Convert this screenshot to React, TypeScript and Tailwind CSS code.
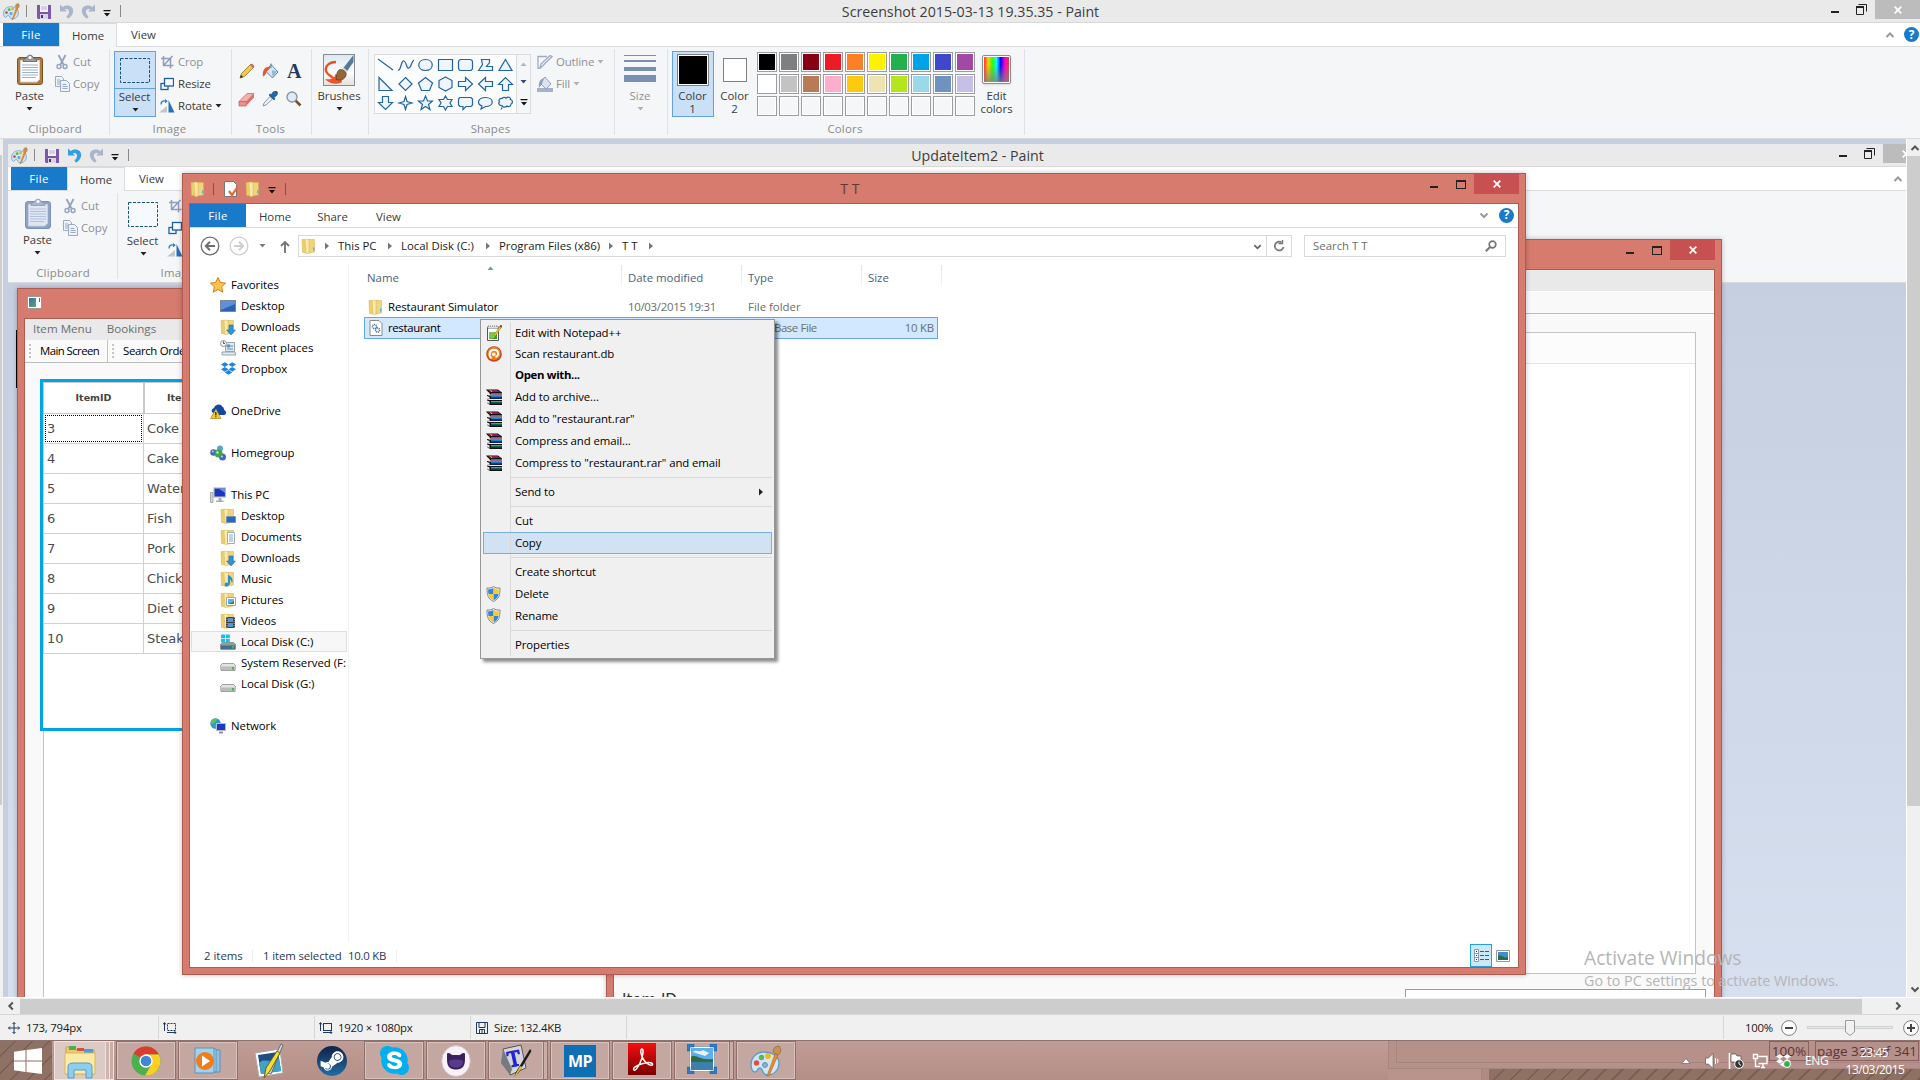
import React from "react";
import { FaSkype, FaSteamSymbol, FaDropbox } from "react-icons/fa";

type Kids = { children?: React.ReactNode };

/* ---------- small glyphs ---------- */

const Caret = ({ c = "#222", className = "" }: { c?: string; className?: string }) => (
  <svg width="7" height="4" viewBox="0 0 7 4" className={className}>
    <path d="M0.5 0h6l-3 3.4z" fill={c} />
  </svg>
);

const Chevron = ({ dir, c = "#9a9a9a", s = 10 }: { dir: "up" | "down" | "left" | "right"; c?: string; s?: number }) => {
  const d = { up: "M1.5 7L5 3.5L8.5 7", down: "M1.5 3.5L5 7L8.5 3.5", left: "M6.8 1.5L3.3 5L6.8 8.5", right: "M3.3 1.5L6.8 5L3.3 8.5" }[dir];
  return (
    <svg width={s} height={s} viewBox="0 0 10 10" fill="none" stroke={c} strokeWidth="2">
      <path d={d} />
    </svg>
  );
};

const Help = () => (
  <span className="flex h-[15px] w-[15px] shrink-0 items-center justify-center rounded-full bg-[#1979ca] text-[12px] font-bold leading-none text-white">?</span>
);

const QatCaret = () => (
  <svg width="8" height="7" viewBox="0 0 8 7">
    <path d="M0.5 0h7v1.2h-7zM1 3h6l-3 3.5z" fill="#111" />
  </svg>
);

const PaletteIcon = ({ s = 17 }: { s?: number }) => (
  <svg width={s} height={s} viewBox="0 0 32 32">
    <path d="M14 7C6 7 1 13 1 20c0 4 2 7 4 7 3 0 2-4 5-4s2 7 7 7c7 0 12-5 12-12C29 11 22 7 14 7z" fill="#cfe6f5" stroke="#5c9cc8" strokeWidth="1.4" />
    <circle cx="6.500" cy="18" r="2.700" fill="#e04a3f" />
    <circle cx="11.500" cy="12.500" r="2.700" fill="#58b947" />
    <circle cx="18" cy="11" r="2.900" fill="#f4b61e" />
    <circle cx="15" cy="20" r="2.400" fill="#8cb4d4" stroke="#5c87ad" />
    <path d="M25 9l3 1L19 31l-2 0z" fill="#f08a2b" stroke="#b9611a" strokeWidth="0.6" />
    <path d="M23 7c0-4 3-6 6-6 3 3 2 7-1 9z" fill="#c79156" stroke="#8a5c2e" strokeWidth="0.6" />
  </svg>
);

const SaveIcon = () => (
  <svg width="14" height="14" viewBox="0 0 14 14">
    <path d="M0 0h14v14H1l-1-1z" fill="#7d57a8" />
    <rect x="3" y="0" width="8" height="7" fill="#f3f1f8" />
    <path d="M4 2h6M4 4h6" stroke="#b9aed0" />
    <rect x="3" y="9" width="8" height="5" fill="#d9d3e6" />
    <rect x="4" y="10" width="2" height="3" fill="#4b3570" />
  </svg>
);

const UndoIcon = ({ c, flip = false }: { c: string; flip?: boolean }) => (
  <svg width="14" height="15" viewBox="0 0 14 15" className={flip ? "-ml-[2px] -scale-x-100" : ""}>
    <path d="M0 0.500v7h7L4.800 5.300C9 3.600 11 8.500 6.500 12.500L8 14.800C16 10 14.500 0 5 1.800L2.600 3z" fill={c} />
  </svg>
);

const FolderIcon = ({ extra, s = 16 }: { extra?: React.ReactNode; s?: number }) => (
  <svg width={s} height={s} viewBox="0 0 16 16" className="shrink-0">
    <path d="M1 1.500h6l1 1v12.500L1.500 14.500z" fill="#eccf6c" stroke="#cfae4b" strokeWidth="0.5" />
    <path d="M4 1l5 0.500v13L5 16z" fill="#fbeaa9" stroke="#d9bb5e" strokeWidth="0.5" />
    <path d="M8 1.500h5.500v12.500L8 15z" fill="#efd57c" stroke="#d0ae4e" strokeWidth="0.5" />
    {extra ?? <path d="M12 9.500h1.500v3H12z" fill="#4fb4e6" />}
  </svg>
);

/* ---------- Paint ribbon icons ---------- */

const PasteIcon = ({ off }: { off: boolean }) => (
  <svg width="26" height="31" viewBox="0 0 26 31">
    <rect x="0.500" y="3.500" width="25" height="27" rx="2.500" fill={off ? "#8fa1c4" : "#b17c3b"} stroke={off ? "#7d90b6" : "#7d5422"} />
    <path d="M3.500 6.500h19v19l-3 2.500h-16z" fill={off ? "#dfe6f3" : "#fff"} stroke={off ? "#c6d0e4" : "#cfd4da"} />
    <path d="M5 11h16M5 13.500h16M5 16h16M5 18.500h16M5 21h16M5 23.500h14" stroke={off ? "#b4c1dc" : "#9db0c8"} />
    <path d="M6 7.500c0-3 3-2 4-4.500 1-2.500 5-2.500 6 0 1 2.500 4 1.500 4 4.500z" fill={off ? "#a8b5d0" : "#989ca1"} stroke={off ? "#8b9bbd" : "#5f6368"} strokeWidth="0.8" />
    <circle cx="13" cy="3.500" r="1.500" fill="#fff" />
  </svg>
);

const CutIcon = () => (
  <svg width="16" height="16" viewBox="0 0 16 16" fill="none" stroke="#93a2bd">
    <path d="M4.500 1l5 9.500M11.500 1l-5 9.500" strokeWidth="1.8" />
    <circle cx="5" cy="12.500" r="2" strokeWidth="1.4" />
    <circle cx="11" cy="12.500" r="2" strokeWidth="1.4" />
  </svg>
);

const CopyIcon = () => (
  <svg width="16" height="16" viewBox="0 0 16 16" fill="#eef2f9" stroke="#9aa9c6">
    <path d="M1.500 0.500h6l2 2v8h-8z" />
    <path d="M3 4h3M3 6h3M3 8h3" />
    <path d="M6.500 4.500h6l3 3v8h-9z" />
    <path d="M8.500 8.500h4M8.500 10.500h5M8.500 12.500h5" />
  </svg>
);

const CropIcon = () => (
  <svg width="14" height="14" viewBox="0 0 14 14" fill="none" stroke="#8d9dbb" strokeWidth="1.500">
    <path d="M3.500 1v9.500h10M1 3.500h9.500v10M4 10l8.500-9" />
  </svg>
);

const ResizeIcon = () => (
  <svg width="14" height="14" viewBox="0 0 14 14" fill="#f7fafe" stroke="#1a5ea5" strokeWidth="1.300">
    <rect x="1" y="6.500" width="7" height="6" />
    <rect x="4.500" y="1.500" width="9" height="7.500" />
  </svg>
);

const RotateIcon = () => (
  <svg width="16" height="14" viewBox="0 0 16 14">
    <path d="M0 13.500h8V7z" fill="#c3c7cc" />
    <path d="M9.500 1v12.500h6z" fill="#2372b9" />
    <path d="M2 5.500C2 2.500 4 1.500 6.500 2" fill="none" stroke="#2e80c8" strokeWidth="1.400" />
    <path d="M6 0l2.800 2.200L6 4.200z" fill="#2e80c8" />
  </svg>
);

const PencilIcon = () => (
  <svg width="16" height="16" viewBox="0 0 16 16">
    <path d="M1 15l1.500-4.500L12 1l3 3-9.500 9.500z" fill="#f3c84d" stroke="#7c6320" strokeWidth="0.700" />
    <path d="M1 15l1-3 2 2z" fill="#222" />
    <path d="M11 2l1-1c1-1 4 2 3 3l-1 1z" fill="#d0665d" />
  </svg>
);

const BucketIcon = () => (
  <svg width="17" height="17" viewBox="0 0 17 17">
    <path d="M9 1.500l7 7.500-5.500 6L4 8.500z" fill="#d9e7f3" stroke="#5d83a8" />
    <path d="M9 5V0.500" stroke="#5d83a8" />
    <path d="M10 7l5 1.500-4.500 5.500z" fill="#8fb4d4" />
    <path d="M9 4C4 3 0 6 1 13.500 3.500 13 4 9 5.500 8z" fill="#e7592b" />
  </svg>
);

const EraserIcon = () => (
  <svg width="17" height="15" viewBox="0 0 17 15">
    <path d="M1 9.500L9 1.500h7L8.500 9.500z" fill="#f6b0ac" stroke="#b9615d" strokeWidth="0.700" />
    <path d="M1 9.500h7.500L8 14H1z" fill="#ee918c" stroke="#b9615d" strokeWidth="0.700" />
    <path d="M8.500 9.500L16 1.500v4L8 14z" fill="#d9716c" />
  </svg>
);

const DropperIcon = () => (
  <svg width="16" height="16" viewBox="0 0 16 16">
    <path d="M1 15l1-3 6-6.500 2.500 2.500L4 14z" fill="#e9eff5" stroke="#76879a" strokeWidth="0.800" />
    <path d="M7 4l5 5 1-1-1-1.500c4-2 4-5 3-6s-4-0.500-5.500 3L8 3z" fill="#2067a8" stroke="#16487a" strokeWidth="0.600" />
  </svg>
);

const MagnifierIcon = () => (
  <svg width="16" height="16" viewBox="0 0 16 16">
    <path d="M9.500 9.500l5 5" stroke="#7b5127" strokeWidth="2.600" />
    <circle cx="6" cy="6" r="5" fill="#dcebf7" stroke="#8d979f" strokeWidth="1.400" />
  </svg>
);

const BrushesIcon = () => (
  <svg width="32" height="32" viewBox="0 0 32 32">
    <defs>
      <linearGradient id="brushBg" x1="0" y1="0" x2="0" y2="1">
        <stop offset="0" stopColor="#dbe8f3" />
        <stop offset="0.600" stopColor="#fdfdfc" />
        <stop offset="1" stopColor="#e3e0dc" />
      </linearGradient>
    </defs>
    <rect x="0.500" y="0.500" width="31" height="31" fill="url(#brushBg)" stroke="#888d93" />
    <path d="M13 8C5 8 2 13 3 17c1 4 6 5 9 9" fill="none" stroke="#ea5324" strokeWidth="2.400" />
    <path d="M2 25c4 5 13 6 17 3l-1-5-6-3c1 4-4 6-10 5z" fill="#e8562a" />
    <path d="M30.500 1v7l-7 10-4-3z" fill="#56799e" />
    <path d="M20.500 13.500l4 3.500-2 3.500-5-4z" fill="#d5d7d8" />
    <path d="M17 15.500c4 0 7 3 6 6-2 5-6 5-10 4 1-4 0-8 4-10z" fill="#94673a" stroke="#5c3c1c" strokeWidth="0.700" />
  </svg>
);

const shapePaths = [
  "M1 2l15 11",
  "M1 13C4 14 4 3 7 4s2 8 5 7 2-7 5-8",
  "M8.500 2.500c9 0 9 11 0 11s-9-11 0-11z",
  "M1.500 2.500h14v11h-14z",
  "M4 2.500h9a2.500 2.500 0 012.500 2.500v6a2.500 2.500 0 01-2.500 2.500H4A2.500 2.500 0 011.500 11V5A2.500 2.500 0 014 2.500z",
  "M1.500 13.500l4-6-1-5h8v3l-3 4h6v4z",
  "M8.500 2.500l6.500 11H2z",
  "M2 1.500v13h13z",
  "M8.500 1.500l6.500 6.500-6.500 6.500L2 8z",
  "M8.500 1.500l7 5.500-3 7.500h-8L1.500 7z",
  "M8.500 1l6.500 3.500v7L8.500 15 2 11.500v-7z",
  "M1.500 5.500h7v-4L15.500 8l-7 6.500v-4h-7z",
  "M15.500 5.500h-7v-4L1.500 8l7 6.500v-4h7z",
  "M5.500 14.500v-6h-4L8.500 1.500l7 7h-4v6z",
  "M5.500 1.500v6h-4l7 7 7-7h-4v-6z",
  "M8.500 1.500L10 6.500 15 8l-5 1.500-1.500 5L7 9.500 2 8l5-1.500z",
  "M8.500 1l2 5h5l-4 3.500 1.500 5-4.500-3-4.500 3L5.500 9.500 1.500 6h5z",
  "M8.500 1l2 3.500h4.500L13 8l2 3.500h-4.500L8.500 15l-2-3.500H2L4 8 2 4.500h4.500z",
  "M3 2.500h11l1.500 1.500v6L14 11.500H9L6 14.500v-3H3L1.500 10V4z",
  "M8.500 2.500c9 0 9 9 0 9L4 14l1-3C-1 9 1 2.500 8.500 2.500z",
  "M5 3.500c1-2 4-1 4-0.500 2-2 5-0.500 4.500 1.500 3 1 2 4 0.500 4.500 0 3-3 3-4 2-2 2-5 1-5-0.500C2 11 1 8 2.500 7 1 5 3 3 5 3.500zM5 12.500l-1 2",
];

const ShapeIcon = ({ d }: { d: string }) => (
  <svg width="17" height="16" viewBox="0 0 17 16" fill="#eef5fc" stroke="#24649f" strokeWidth="1.200">
    <path d={d} />
  </svg>
);

/* ---------- Paint window header ---------- */

const Group = ({ w, label, children }: Kids & { w: string; label?: string }) => (
  <div className={`flex h-[91px] shrink-0 flex-col ${w}`}>
    <div className="flex h-[73px] pt-[4px]">{children}</div>
    <div className="flex h-[18px] items-center justify-center pr-[2px] tracking-[0.02em] text-[#8a8a8a]">{label}</div>
  </div>
);

const Sep = () => <div className="mt-[2px] h-[86px] w-px shrink-0 bg-[#e1e2e3]" />;

const SmallItem = ({ icon, label, off, caret }: { icon: React.ReactNode; label: string; off?: boolean; caret?: boolean }) => (
  <div className={`flex h-[22px] items-center gap-[3px] ${off ? "text-[#8f9093]" : "text-[#3b3b3b]"}`}>
    <span className="flex w-4 justify-center">{icon}</span>
    <span className="whitespace-nowrap tracking-[-0.01em]">{label}</span>
    {caret && <Caret c={off ? "#b0b0b0" : "#222"} />}
  </div>
);

const palette = [
  ["bg-black", "bg-[#7f7f7f]", "bg-[#880015]", "bg-[#ed1c24]", "bg-[#ff7f27]", "bg-[#fff200]", "bg-[#22b14c]", "bg-[#00a2e8]", "bg-[#3f48cc]", "bg-[#a349a4]"],
  ["bg-white", "bg-[#c3c3c3]", "bg-[#b97a57]", "bg-[#ffaec9]", "bg-[#ffc90e]", "bg-[#efe4b0]", "bg-[#b5e61d]", "bg-[#99d9ea]", "bg-[#7092be]", "bg-[#c8bfe7]"],
  Array(10).fill("bg-[#f5f6f7]"),
];

const CloseGlyph = () => (
  <svg width="8" height="8" viewBox="0 0 8 8">
    <path d="M0.700 0.700l6.600 6.600M7.300 0.700L0.700 7.300" stroke="#fff" strokeWidth="1.700" />
  </svg>
);

const CaptionButtons = () => (
  <div className="flex items-start">
    <div className="mt-[11px] mr-[17px] h-[2px] w-[8px] bg-[#222]" />
    <svg width="11" height="11" viewBox="0 0 11 11" className="mt-[4px] mr-[8px]">
      <path d="M2.500 0.500h8v7" fill="none" stroke="#222" />
      <path d="M0.500 3v7.500h7V3z" fill="none" stroke="#222" />
      <path d="M0 2h8v2H0z" fill="#222" />
    </svg>
    <div className="flex h-[19px] w-[45px] items-center justify-center bg-[#bcbcbc]">
      <CloseGlyph />
    </div>
  </div>
);

const PaintHeader = ({ title, inner }: { title: string; inner: boolean }) => (
  <div className="flex w-[1920px] flex-col">
    <div className="grid h-[23px] grid-cols-[808px_325px_1fr] border-b border-[#d9d9d9] bg-[#eaeaea]">
      <div className="flex items-center pl-[3px]">
        <PaletteIcon />
        <div className="ml-[6px] h-3 w-px bg-[#8a8a8a]" />
        <div className="ml-[10px] flex items-center gap-[9px] pt-[1px]">
          <SaveIcon />
          <UndoIcon c={inner ? "#2f9fe6" : "#a9b5cb"} />
          <UndoIcon c="#a9b5cb" flip />
          <span className="-ml-px flex pt-[3px]">
            <QatCaret />
          </span>
        </div>
        <div className="ml-[9px] h-3 w-px bg-[#8a8a8a]" />
      </div>
      <div className={`flex items-center justify-center whitespace-nowrap text-[14.2px] text-[#3d3d3d] ${inner ? "pt-px pr-[2px]" : "pt-px"}`}>{title}</div>
      <div className="flex justify-end">
        <CaptionButtons />
      </div>
    </div>
    <div className="flex h-6 border-b border-[#dadbdc] bg-white pl-[3px] text-[#3b3b3b]">
      <div className="flex w-14 items-center justify-center bg-[#1979ca] tracking-[0.03em] text-white">File</div>
      <div className="z-10 -mb-px flex w-[58px] items-center justify-center border-x border-t border-[#dadbdc] bg-[#f5f6f7]">Home</div>
      <div className="flex w-[53px] items-center justify-center">View</div>
      <div className="ml-auto flex items-center gap-[9px] pr-[1px]">
        <Chevron dir="up" />
        {!inner && <Help />}
        {inner && <div className="w-[15px]" />}
      </div>
    </div>
    <div className="flex h-[92px] border-b border-[#d9dadb] bg-[#f5f6f7] pl-[3px] text-[#3b3b3b]">
      <Group w="w-[106px]" label="Clipboard">
        <div className="flex w-[53px] flex-col items-center pt-[3px]">
          <PasteIcon off={inner} />
          <span className="mt-[3px] leading-4">Paste</span>
          <Caret className="mt-[3px]" />
        </div>
        <div className="-ml-[2px] flex flex-col">
          <SmallItem icon={<CutIcon />} label="Cut" off />
          <SmallItem icon={<CopyIcon />} label="Copy" off />
        </div>
      </Group>
      <Sep />
      <Group w="w-[121px]" label="Image">
        <div className={`ml-[4px] flex h-[66px] w-[42px] flex-col items-center border ${inner ? "border-transparent" : "border-[#62a2e4] bg-[#c9e0f7]"}`}>
          <div className={`flex h-[37px] w-full items-center justify-center border-b ${inner ? "border-transparent" : "border-[#62a2e4]"}`}>
            <svg width="30" height="25" viewBox="0 0 30 25">
              <rect x="0.500" y="0.500" width="29" height="24" fill={inner ? "#f6fafe" : "none"} stroke="#14508c" strokeDasharray="3 1.500" />
            </svg>
          </div>
          <span className="-ml-px leading-4">Select</span>
          <Caret className="mt-[3px]" />
        </div>
        <div className="ml-[3px] flex flex-col">
          <SmallItem icon={<CropIcon />} label="Crop" off />
          <SmallItem icon={<ResizeIcon />} label="Resize" />
          <SmallItem icon={<RotateIcon />} label="Rotate" caret />
        </div>
      </Group>
      <Sep />
      <Group w="w-[79px]" label="Tools">
        <div className="mt-[6px] ml-[3px] grid h-[56px] w-[71px] grid-cols-3 grid-rows-2 place-items-center">
          <PencilIcon />
          <BucketIcon />
          <span className="font-['Liberation_Serif'] text-[20px] font-bold leading-none text-[#1f3a63]">A</span>
          <EraserIcon />
          <DropperIcon />
          <MagnifierIcon />
        </div>
      </Group>
      <Sep />
      <Group w="w-[56px]">
        <div className="flex w-full flex-col items-center pt-[3px] pr-[2px]">
          <BrushesIcon />
          <span className="mt-[2px] leading-4">Brushes</span>
          <Caret className="mt-[3px]" />
        </div>
      </Group>
      <Sep />
      <Group w="w-[245px]" label="Shapes">
        <div className="mt-[3px] ml-[5px] flex h-[60px] border border-[#dadbdc] bg-[#fbfcfd]">
          <div className="grid w-[141px] grid-cols-7 grid-rows-3 place-items-center pr-px">
            {shapePaths.map((d) => (
              <ShapeIcon key={d} d={d} />
            ))}
          </div>
          <div className="flex w-[14px] flex-col items-center justify-around border-l border-[#dadbdc] bg-[#f5f6f7]">
            <Caret c="#b5b5b5" className="rotate-180" />
            <Caret c="#344a6b" />
            <QatCaret />
          </div>
        </div>
        <div className="ml-[6px] flex flex-col">
          <SmallItem
            off
            caret
            label="Outline"
            icon={
              <svg width="16" height="14" viewBox="0 0 16 14" fill="none" stroke="#9fabc2" strokeWidth="1.300">
                <path d="M10 1.500H1v12h2L15 1.500l-2-1L4 9l-1 4" />
              </svg>
            }
          />
          <SmallItem
            off
            caret
            label="Fill"
            icon={
              <svg width="16" height="16" viewBox="0 0 16 16">
                <path d="M0 12h16v4H0z" fill="#a5b1ca" />
                <path d="M8 1l6 7-5 5-6-6z" fill="#dce3ef" stroke="#8f9fbd" />
                <path d="M7 2C3 3 1 7 2 12l3-4z" fill="#8f9fbd" />
              </svg>
            }
          />
        </div>
      </Group>
      <Sep />
      <Group w="w-[52px]">
        <div className="flex w-full flex-col items-center pt-[4px] pr-[2px] text-[#8f9093]">
          <div className="flex h-[32px] w-8 flex-col">
            <div className="h-px bg-[#7b8fb3]" />
            <div className="mt-[4px] h-[2px] bg-[#7b8fb3]" />
            <div className="mt-[5px] h-[4px] bg-[#7b8fb3]" />
            <div className="mt-[4px] h-[7px] bg-[#7b8fb3]" />
          </div>
          <span className="mt-px leading-4">Size</span>
          <Caret c="#b0b0b0" className="mt-[3px]" />
        </div>
      </Group>
      <Sep />
      <Group w="w-[356px]" label="Colors">
        <div className="ml-[4px] flex h-[66px] w-[42px] flex-col items-center border border-[#62a2e4] bg-[#c9e0f7] pt-[2px]">
          <div className="h-8 w-8 border border-[#7f7f7f] bg-black shadow-[inset_0_0_0_1px_#fff]" />
          <span className="mt-[3px] -ml-px text-center leading-[13px]">Color<br />1</span>
        </div>
        <div className="flex w-[42px] flex-col items-center pt-[7px]">
          <div className="h-6 w-6 border border-[#7f7f7f] bg-white" />
          <span className="mt-[7px] -ml-px text-center leading-[13px]">Color<br />2</span>
        </div>
        <div className="mt-px ml-px flex flex-col gap-[2px]">
          {palette.map((row, r) => (
            <div key={r} className="flex gap-[2px]">
              {row.map((c: string, i: number) => (
                <div key={i} className="h-5 w-5 border border-[#9b9da0] bg-white p-px">
                  <div className={`h-full w-full ${c}`} />
                </div>
              ))}
            </div>
          ))}
        </div>
        <div className="ml-[1px] flex w-[41px] flex-col items-center pt-[4px]">
          <div className="h-[29px] w-[29px] rounded-[2px] border border-[#8d8d8d] bg-white p-[1px] shadow-sm">
            <div className="h-full w-full bg-[linear-gradient(to_bottom,transparent_30%,#808080cc),linear-gradient(to_right,#f33,#fc0,#3f0,#0ff,#00f,#f0c,#f33)]" />
          </div>
          <span className="mt-[5px] text-center leading-[13px]">Edit<br />colors</span>
        </div>
      </Group>
      <Sep />
    </div>
  </div>
);

/* ---------- red window frame ---------- */

const RedFrame = ({ place, bar, children }: Kids & { place: string; bar: React.ReactNode }) => (
  <div className={`absolute flex flex-col border border-[#ac5d52] bg-[#d67b6d] px-[6px] pb-[6px] shadow-[0_0_5px_rgba(0,0,0,0.25)] ${place}`}>
    <div className="flex h-[29px] shrink-0">{bar}</div>
    <div className="flex min-h-0 flex-1 flex-col overflow-hidden border border-[#ac5d52] bg-white">{children}</div>
  </div>
);

const RedButtons = () => (
  <div className="ml-auto flex items-start">
    <div className="mt-[12px] mr-[18px] h-[2px] w-[8px] bg-[#222]" />
    <div className="mt-[6px] mr-[8px] h-[9px] w-[10px] border border-t-2 border-[#222]" />
    <div className="flex h-[20px] w-[45px] items-center justify-center bg-[#c75050]">
      <CloseGlyph />
    </div>
  </div>
);

/* ---------- restaurant windows ---------- */

const rows = [
  ["3", "Coke"],
  ["4", "Cake"],
  ["5", "Water"],
  ["6", "Fish"],
  ["7", "Pork"],
  ["8", "Chicken"],
  ["9", "Diet coke"],
  ["10", "Steak"],
];

const Grip = () => (
  <div className="flex flex-col gap-[2px]">
    {[0, 1, 2, 3].map((i) => (
      <div key={i} className="h-[2px] w-[2px] bg-[#c4c4c4]" />
    ))}
  </div>
);

const ItemsWindow = () => (
  <RedFrame
    place="left-[14px] top-[149px] h-[730px] w-[640px]"
    bar={
      <div className="mt-[7px] ml-[3px] flex h-[13px] w-[15px] justify-between border border-[#9a9a9a] bg-white p-[1px]">
        <div className="h-full w-[7px] bg-[linear-gradient(135deg,#3d6f9c,#5aa67c)]" />
        <div className="h-[4px] w-px bg-[#666]" />
      </div>
    }
  >
    <div className="flex h-[21px] shrink-0 items-center gap-[15px] bg-[#e9e9e9] pb-px pl-[8px] text-[11.6px] text-[#6d6d6d]">
      <span>Item Menu</span>
      <span>Bookings</span>
    </div>
    <div className="flex h-[23px] shrink-0 items-center border-b border-[#bdbdbd] bg-[#fafafa] pl-[4px] text-black">
      <Grip />
      <span className="ml-[9px] w-[67px] whitespace-nowrap tracking-[-0.05em]">Main Screen</span>
      <div className="h-full w-px bg-[#c3c3c3]" />
      <div className="ml-[4px]">
        <Grip />
      </div>
      <span className="ml-[9px] whitespace-nowrap tracking-[-0.03em]">Search Orders</span>
    </div>
    <div className="flex flex-1 flex-col bg-[#f9f9f9] pt-[16px] pl-[15px]">
      <div className="h-[352px] border-[3px] border-[#00a2e8] bg-white font-['DejaVu_Sans'] text-[13px] text-[#4c4c4c]">
        <div className="flex h-[32px] border-b border-[#c8c8c8] border-t text-[9.5px] font-bold text-[#444]">
          <div className="flex w-[102px] items-center justify-center border-r-2 border-l border-[#c8c8c8]">ItemID</div>
          <div className="flex items-center pl-[22px]">ItemName</div>
        </div>
        {rows.map(([id, name], i) => (
          <div key={id} className="flex h-[30px] border-b border-[#d0d0d0]">
            <div className="flex w-[101px] border-r border-l border-[#d0d0d0] p-px">
              <div className={`flex flex-1 items-center border border-dotted pl-[1px] ${i === 0 ? "border-black" : "border-transparent"}`}>{id}</div>
            </div>
            <div className="flex items-center pl-[3px]">{name}</div>
          </div>
        ))}
      </div>
      <div className="ml-[3px] flex-1 border-l border-[#c3c3c3] bg-white" />
    </div>
  </RedFrame>
);

const DetailWindow = () => (
  <RedFrame place="left-[603px] top-[100px] h-[800px] w-[1116px]" bar={<RedButtons />}>
    <div className="h-[21px] shrink-0 bg-[#e9e9e9]" />
    <div className="h-[23px] shrink-0 border-t border-b border-t-white border-b-[#bdbdbd] bg-[#f9f9f9]" />
    <div className="flex flex-1 flex-col bg-[#f9f9f9] px-[8px] pt-[18px]">
      <div className="mr-[10px] h-[642px] shrink-0 border border-[#c3c3c3] bg-white">
        <div className="h-[31px] border-b border-[#e3e3e3] bg-[#fcfcfc]" />
      </div>
      <div className="mt-[15px] flex justify-between">
        <span className="pt-px font-['DejaVu_Sans'] text-[15px] leading-[20px] text-[#333]">Item ID</span>
        <div className="h-[30px] w-[301px] border border-[#9d9d9d] bg-white" />
      </div>
    </div>
  </RedFrame>
);

/* ---------- Explorer ---------- */

const Star = () => (
  <svg width="16" height="16" viewBox="0 0 16 16">
    <path d="M8 0.500l2.300 5 5.300 0.600-4 3.600 1.200 5.500L8 12.500l-4.800 2.700 1.200-5.500-4-3.600 5.300-0.600z" fill="#fdc54a" stroke="#d9781e" />
  </svg>
);
const DesktopIcon = () => (
  <svg width="16" height="16" viewBox="0 0 16 16">
    <rect x="0.500" y="2.500" width="15" height="11" fill="#2c62b4" stroke="#7b8794" />
    <path d="M1 3h14v3L1 12z" fill="#5c92d8" />
  </svg>
);
const downArrow = <path d="M9 6h4v5h2.500L11 16 6.500 11H9z" fill="#2f93dc" stroke="#1b649e" strokeWidth="0.500" />;
const screen = <path d="M6.500 8.500h9v6h-9z" fill="#2b68ba" stroke="#7a94b5" />;
const doc = (
  <g>
    <path d="M7.500 3.500h7v11h-7z" fill="#fff" stroke="#a3adb7" />
    <path d="M9 6h4M9 8h4M9 10h4M9 12h4" stroke="#7fa8d0" />
  </g>
);
const note = <path d="M8 15a2 2 0 110-3V4c3 1 6 4 4 8l-2-4v5z" fill="#2b8fd8" />;
const photo = (
  <g>
    <path d="M6.500 5.500h9v8h-9z" fill="#fff" stroke="#98a4ae" />
    <path d="M8 7h6v5H8z" fill="#5fb3dc" />
    <path d="M8 12l6-3v3z" fill="#3f8a4b" />
  </g>
);
const film = (
  <g>
    <path d="M6 4h9v11H6z" fill="#3c3f46" />
    <path d="M8 5h5v4H8zM8 10h5v4H8z" fill="#5c96c8" />
    <path d="M7 4v11M14.200 4v11" stroke="#ddd" strokeDasharray="1 1" strokeWidth="0.800" />
  </g>
);
const RecentIcon = () => (
  <svg width="16" height="16" viewBox="0 0 16 16">
    <path d="M5.500 2.500h9v9h-9zM2 12h13l1 3H2z" fill="#e4e9ee" stroke="#9aa3ad" />
    <path d="M7 5h3v2H7zM11 6h2M7 9h6" stroke="#4d94cf" fill="#4d94cf" />
    <circle cx="3.500" cy="3.500" r="3" fill="#f2f2f2" stroke="#999" />
    <path d="M3.500 1.500v2h1.500" stroke="#555" fill="none" />
  </svg>
);
const OneDriveIcon = () => (
  <svg width="16" height="16" viewBox="0 0 16 16">
    <path d="M2 9a3 3 0 012-4c1-4 7-5 8.500-1 1.500 0 1.500 2 1.500 3 3 1 2.500 5 0 5H6z" fill="#1148a8" />
    <path d="M6 6L0.500 15.500h10.500z" fill="#f6cb28" stroke="#a8851a" strokeWidth="0.700" />
    <path d="M5.800 9v3.500M5.800 13.300v1" stroke="#222" strokeWidth="1.200" />
  </svg>
);
const HomegroupIcon = () => (
  <svg width="16" height="16" viewBox="0 0 16 16">
    <circle cx="10" cy="3.500" r="3" fill="#5aa2d4" />
    <circle cx="3.500" cy="7.500" r="3.200" fill="#4763b5" />
    <circle cx="12.500" cy="12" r="3.500" fill="#4a67bd" />
    <circle cx="8.500" cy="8.500" r="4" fill="#3da648" />
    <circle cx="7.500" cy="7.500" r="1.300" fill="#c7efc4" />
    <circle cx="2.800" cy="6.500" r="1" fill="#c3cff0" />
    <circle cx="12" cy="11.500" r="1" fill="#c3cff0" />
  </svg>
);
const PcIcon = () => (
  <svg width="16" height="16" viewBox="0 0 16 16">
    <path d="M0.500 5.500h2.500v10H0.500z" fill="#d5d8dc" stroke="#8d9297" strokeWidth="0.700" />
    <rect x="4" y="1" width="11.500" height="9" fill="#1c35c0" stroke="#b4b8bc" strokeWidth="1.200" />
    <path d="M9 1.800h6v4z" fill="#6e90ee" />
    <path d="M8.500 11h3v2.500h2V15H6v-1.500h2.500z" fill="#a9adb1" />
  </svg>
);
const DiskIcon = ({ win = false }: { win?: boolean }) => (
  <svg width="16" height="16" viewBox="0 0 16 16">
    <path d="M2.500 8.500h11L16 11v3.500l-1 1H1l-1-1V11z" fill={win ? "#8f9ca5" : "#e3e3e3"} stroke="#7c7f82" strokeWidth="0.700" />
    <rect x="1" y="11.500" width="14" height="3.500" fill={win ? "#3f7088" : "#b9bbbd"} />
    <rect x="12" y="12" width="2" height="2.500" fill="#3fc13a" />
    {win && <path d="M1 0.500h4v3.500H1zM5.800 0.500h4v3.500h-4zM1 4.800h4v3.500H1zM5.800 4.800h4v3.500h-4z" fill="#12c1ef" />}
  </svg>
);
const NetworkIcon = () => (
  <svg width="16" height="16" viewBox="0 0 16 16">
    <circle cx="5.500" cy="5.500" r="5.200" fill="#2e9ad0" />
    <path d="M3 1c3-1 5 0 3 2S4 6 2 6 1 3 3 1zM5 7l4-1v3l-3 2z" fill="#63c254" />
    <rect x="6.500" y="5.500" width="9" height="7" fill="#1d39c4" stroke="#b7bcc2" />
    <path d="M9 14.500h4" stroke="#8e9297" strokeWidth="2" />
  </svg>
);

type Nav = { icon: React.ReactNode; label: string; top?: boolean; sel?: boolean } | null;
const nav: Nav[] = [
  { icon: <Star />, label: "Favorites", top: true },
  { icon: <DesktopIcon />, label: "Desktop" },
  { icon: <FolderIcon extra={downArrow} />, label: "Downloads" },
  { icon: <RecentIcon />, label: "Recent places" },
  { icon: <FaDropbox size={15} color="#1a86e0" />, label: "Dropbox" },
  null,
  { icon: <OneDriveIcon />, label: "OneDrive", top: true },
  null,
  { icon: <HomegroupIcon />, label: "Homegroup", top: true },
  null,
  { icon: <PcIcon />, label: "This PC", top: true },
  { icon: <FolderIcon extra={screen} />, label: "Desktop" },
  { icon: <FolderIcon extra={doc} />, label: "Documents" },
  { icon: <FolderIcon extra={downArrow} />, label: "Downloads" },
  { icon: <FolderIcon extra={note} />, label: "Music" },
  { icon: <FolderIcon extra={photo} />, label: "Pictures" },
  { icon: <FolderIcon extra={film} />, label: "Videos" },
  { icon: <DiskIcon win />, label: "Local Disk (C:)", sel: true },
  { icon: <DiskIcon />, label: "System Reserved (F:)" },
  { icon: <DiskIcon />, label: "Local Disk (G:)" },
  null,
  { icon: <NetworkIcon />, label: "Network", top: true },
];

const CrumbArrow = () => (
  <svg width="4" height="8" viewBox="0 0 4 8" className="shrink-0">
    <path d="M0 0.500L4 4L0 7.500z" fill="#777" />
  </svg>
);

const Crumb = ({ w, children }: Kids & { w: string }) => (
  <>
    <span className={`ml-[9px] shrink-0 whitespace-nowrap ${w}`}>{children}</span>
    <CrumbArrow />
  </>
);

const NavCircle = ({ c, flip }: { c: string; flip?: boolean }) => (
  <svg width="20" height="20" viewBox="0 0 20 20" className={flip ? "-scale-x-100" : ""} fill="none" stroke={c}>
    <circle cx="10" cy="10" r="8.800" strokeWidth="1.300" />
    <path d="M15 10H6M10 5.800L5.800 10L10 14.200" strokeWidth="2" />
  </svg>
);

const Header = ({ w, children }: Kids & { w: string }) => (
  <div className={`flex h-[24px] items-center pl-[6px] pt-[1px] text-[#4c607a] ${w}`}>{children}</div>
);
const HeaderSep = () => <div className="h-[22px] w-px bg-gradient-to-b from-[#d3e3f3] to-[#f3f8fd]" />;

const Explorer = () => (
  <RedFrame
    place="left-[179px] top-[34px] h-[802px] w-[1344px]"
    bar={
      <div className="grid flex-1 grid-cols-[600px_122px_1fr]">
        <div className="flex items-center pl-[1px]">
          <FolderIcon />
          <div className="ml-[7px] h-3 w-px bg-[#8c4d44]" />
          <svg width="15" height="16" viewBox="0 0 15 16" className="ml-[9px]">
            <path d="M1.500 0.500h9l3 3v12h-12z" fill="#fbfbfb" stroke="#777" />
            <path d="M6 10l3 4 5.500-8" fill="none" stroke="#e06a33" strokeWidth="2.200" />
          </svg>
          <span className="ml-[7px]">
            <FolderIcon />
          </span>
          <span className="ml-[7px] flex pt-[3px]">
            <QatCaret />
          </span>
          <div className="ml-[9px] h-3 w-px bg-[#8c4d44]" />
        </div>
        <div className="flex items-center justify-center text-[14.200px] text-[#5f3a35]">T T</div>
        <RedButtons />
      </div>
    }
  >
    <div className="flex h-6 shrink-0 border-b border-[#dadbdc] text-[#3b3b3b]">
      <div className="flex w-14 items-center justify-center bg-[#1979ca] tracking-[0.03em] text-white">File</div>
      <div className="flex w-[58px] items-center justify-center pt-[2px]">Home</div>
      <div className="flex w-[57px] items-center justify-center pt-[2px]">Share</div>
      <div className="flex w-[55px] items-center justify-center pt-[2px]">View</div>
      <div className="ml-auto flex items-center gap-[10px] pr-[4px] pb-px">
        <Chevron dir="down" />
        <Help />
      </div>
    </div>
    <div className="flex h-[37px] shrink-0 items-center pb-px pl-[10px]">
      <NavCircle c="#6f6f6f" />
      <span className="ml-[9px] flex">
        <NavCircle c="#cfcfcf" flip />
      </span>
      <Caret c="#7b7b7b" className="ml-[10px]" />
      <svg width="10" height="13" viewBox="0 0 10 13" className="ml-[14px]" fill="none" stroke="#777" strokeWidth="1.900">
        <path d="M5 13V2M1 6l4-4 4 4" />
      </svg>
      <div className="ml-[8px] flex h-[22px] w-[994px] items-center border border-[#d9d9d9] pl-[2px] text-[#1a1a1a]">
        <FolderIcon />
        <span className="ml-[8px] flex">
          <CrumbArrow />
        </span>
        <Crumb w="w-[50px]">This PC</Crumb>
        <Crumb w="w-[85px]">Local Disk (C:)</Crumb>
        <Crumb w="w-[110px]">Program Files (x86)</Crumb>
        <Crumb w="w-[27px]">T T</Crumb>
        <div className="ml-auto flex h-full items-center">
          <Chevron dir="down" c="#666" s={9} />
          <div className="ml-[4px] flex h-full w-[25px] items-center justify-center border-l border-[#d9d9d9]">
            <svg width="12" height="12" viewBox="0 0 12 12" fill="none" stroke="#777" strokeWidth="1.700">
              <path d="M8.500 2.300A4.400 4.400 0 1010.500 7" />
              <path d="M9.500 0v3.500H5.500" strokeWidth="1.400" />
            </svg>
          </div>
        </div>
      </div>
      <div className="ml-[12px] flex h-[22px] w-[202px] items-center justify-between border border-[#d9d9d9] pr-[8px] pl-[8px] text-[#6d6d6d]">
        <span>Search T T</span>
        <svg width="12" height="12" viewBox="0 0 12 12" fill="none" stroke="#777">
          <circle cx="7.500" cy="4.500" r="3.300" strokeWidth="1.700" />
          <path d="M5 7L0.800 11.200" strokeWidth="2" />
        </svg>
      </div>
    </div>
    <div className="flex min-h-0 flex-1">
      <div className="mb-[2px] flex w-[159px] shrink-0 flex-col border-r border-[#f3f3f3] pt-[9px]">
        {nav.map((n, i) =>
          n ? (
            <div
              key={i}
              className={`mx-px flex h-[21px] shrink-0 items-center gap-[5px] overflow-hidden whitespace-nowrap border text-black ${n.top ? "pl-[18px]" : "pl-[28px]"} ${n.sel ? "border-[#dedede] bg-[#f7f7f7]" : "border-transparent"}`}
            >
              <span className="flex w-4 shrink-0 justify-center">{n.icon}</span>
              <span className="tracking-[-0.003em]">{n.label}</span>
            </div>
          ) : (
            <div key={i} className="h-[21px]" />
          ),
        )}
      </div>
      <div className="flex flex-1 flex-col pl-[12px]">
        <div className="flex h-[22px]">
          <Header w="w-[260px]">
            <span className="flex-1">Name</span>
            <Caret c="#6c9cbb" className="mr-[127px] mb-[20px] rotate-180" />
          </Header>
          <HeaderSep />
          <Header w="w-[119px]">Date modified</Header>
          <HeaderSep />
          <Header w="w-[119px]">Type</Header>
          <HeaderSep />
          <Header w="w-[79px]">Size</Header>
          <HeaderSep />
        </div>
        <div className="mt-[9px] ml-[3px] flex h-[21px] w-[574px] items-center pl-[4px] text-[#6d6d6d]">
          <FolderIcon />
          <span className="ml-[4px] w-[240px] tracking-[-0.01em] text-black">Restaurant Simulator</span>
          <span className="w-[120px] tracking-[-0.025em]">10/03/2015 19:31</span>
          <span>File folder</span>
        </div>
        <div className="ml-[3px] flex h-[22px] w-[574px] items-center border border-[#66a7e8] bg-[#d1e8ff] pr-[3px] pl-[4px] text-[#6d6d6d]">
          <svg width="14" height="16" viewBox="0 0 14 16">
            <path d="M1 0.500h9l3 3v12H1z" fill="#fff" stroke="#8b8b8b" />
            <circle cx="5.500" cy="6.500" r="2" fill="none" stroke="#3e6d95" strokeDasharray="1 0.600" strokeWidth="1.500" />
            <circle cx="8.500" cy="10" r="2" fill="none" stroke="#3e6d95" strokeDasharray="1 0.600" strokeWidth="1.500" />
          </svg>
          <span className="ml-[5px] w-[240px] tracking-[-0.03em] text-black">restaurant</span>
          <span className="w-[120px]">13/03/2015 19:31</span>
          <span className="tracking-[-0.035em]">Data Base File</span>
          <span className="ml-auto tracking-[-0.02em]">10 KB</span>
        </div>
      </div>
    </div>
    <div className="flex h-[23px] shrink-0 items-center pl-[14px] text-[#1e395b]">
      <span className="w-[48px]">2 items</span>
      <div className="h-3 w-px bg-[#ececec]" />
      <span className="ml-[10px] w-[85px] whitespace-nowrap tracking-[-0.01em]">1 item selected</span>
      <span className="w-[48px] whitespace-nowrap tracking-[-0.02em]">10.0 KB</span>
      <div className="h-3 w-px bg-[#ececec]" />
      <div className="ml-auto flex h-[23px] w-[22px] items-center justify-center border border-[#26a0da] bg-[#cbe8f6]">
        <svg width="15" height="13" viewBox="0 0 15 13" fill="none" stroke="#555">
          <path d="M6 2.500h4M11 2.500h4M6 6.500h4M11 6.500h4M6 10.500h4M11 10.500h4" />
          <path d="M0.500 0.500h4v12h-4zM0.500 4.500h4M0.500 8.500h4" stroke="#8a9bb0" fill="#fff" />
          <path d="M2 2.500h1M2 6.500h1M2 10.500h1" stroke="#222" />
        </svg>
      </div>
      <svg width="14" height="12" viewBox="0 0 14 12" className="mr-[8px] ml-[4px]">
        <path d="M0.500 0.500h13v11H0.500z" fill="#fff" stroke="#999" />
        <path d="M2 2h10v8H2z" fill="#3f8fd0" />
        <path d="M2 6c4-2 6 3 10 1v3H2z" fill="#2b6a4c" />
      </svg>
    </div>
  </RedFrame>
);

/* ---------- context menu ---------- */

const NotepadIcon = () => (
  <svg width="16" height="16" viewBox="0 0 16 16">
    <path d="M1.500 2.500h11v13h-11z" fill="#fff" stroke="#555" />
    <path d="M2 1h10v2.500H2z" fill="#ddd" stroke="#777" strokeDasharray="1 1" />
    <path d="M3 7h8v7H3z" fill="#7ac54a" />
    <path d="M3 14l5-1 3-5v6z" fill="#3c9a2f" />
    <path d="M8 10l6-9 1.500 1L9.500 11z" fill="#eec545" stroke="#8b6c1d" strokeWidth="0.500" />
    <circle cx="15" cy="1.300" r="1.200" fill="#b7312b" />
  </svg>
);
const AvastIcon = () => (
  <svg width="16" height="16" viewBox="0 0 16 16">
    <circle cx="8" cy="8" r="7.800" fill="#c9481a" />
    <circle cx="8" cy="7.500" r="6.500" fill="#f2801f" />
    <path d="M5.500 12.300C2.500 10 3 3.800 8 3.800s5.500 6.500 1.500 7" fill="none" stroke="#fff" strokeWidth="2" />
    <circle cx="7.800" cy="8.300" r="1.800" fill="#fff" />
  </svg>
);
const RarIcon = () => (
  <svg width="16" height="16" viewBox="0 0 16 16">
    <path d="M0 0.500h12l4 3v2H4zM1 6l3 0.500h12V10H4L1 9zM1 10.500l3 0.500h12v5H4l-3-2z" fill="#14101a" />
    <path d="M2 1h9l3.500 2H4z" fill="#8f1d5c" />
    <path d="M5 4h11v1.300H5z" fill="#c03a8a" />
    <path d="M5 7h11v1.500H5z" fill="#1f7bd0" />
    <path d="M5 8.500h11v1H5z" fill="#0b3a80" />
    <path d="M5 12h11v1.500H5z" fill="#20b58a" />
    <path d="M5 13.500h11v1H5z" fill="#0c6b45" />
    <path d="M0.500 2v3l3 1.500V4zM1 7v2l2.500 1V8zM1 11.500v2L3.500 15v-2.500z" fill="#eee" />
    <path d="M4.500 1l1.500 2" stroke="#e8c52d" />
  </svg>
);
const ShieldIcon = () => (
  <svg width="15" height="16" viewBox="0 0 15 16">
    <path d="M7.500 0.500c2 1.500 4 1.500 6.500 1.500 0 7-1 11-6.500 13.500C2 13 1 9 1 2c2.500 0 4.500 0 6.500-1.500z" fill="#e6e8ea" stroke="#85898e" />
    <path d="M7.500 2v6H2.500C2 6 2.200 4 2.200 3.200 4.500 3.200 6 3 7.500 2zM7.500 8h5c-0.500 3-2 5-5 6.300z" fill="#2f86dc" />
    <path d="M7.500 2v6h5c0.500-2 0.300-4 0.300-4.800C10.500 3.200 9 3 7.500 2zM7.500 8h-5c0.500 3 2 5 5 6.300z" fill="#f8cc30" />
  </svg>
);

type MenuRow = { label: string; icon?: React.ReactNode; short?: boolean; bold?: boolean; hot?: boolean; sub?: boolean } | "-";
const menu: MenuRow[] = [
  { label: "Edit with Notepad++", icon: <NotepadIcon />, short: true },
  { label: "Scan restaurant.db", icon: <AvastIcon />, short: true },
  { label: "Open with...", bold: true },
  { label: "Add to archive...", icon: <RarIcon /> },
  { label: 'Add to "restaurant.rar"', icon: <RarIcon /> },
  { label: "Compress and email...", icon: <RarIcon /> },
  { label: 'Compress to "restaurant.rar" and email', icon: <RarIcon /> },
  "-",
  { label: "Send to", sub: true },
  "-",
  { label: "Cut" },
  { label: "Copy", hot: true },
  "-",
  { label: "Create shortcut" },
  { label: "Delete", icon: <ShieldIcon /> },
  { label: "Rename", icon: <ShieldIcon /> },
  "-",
  { label: "Properties" },
];

const ContextMenu = () => (
  <div className="absolute top-[180px] left-[477px] flex h-[340px] w-[295px] flex-col border border-[#979797] bg-[#f0f0f0] p-[2px] text-black shadow-[3px_3px_3px_rgba(0,0,0,0.45)]">
    {menu.map((m, i) =>
      m === "-" ? (
        <div key={i} className="flex h-[7px] shrink-0 items-center">
          <div className="ml-[27px] h-full w-px bg-[#d9d9d9]" />
          <div className="h-px flex-1 bg-[#d9d9d9]" />
        </div>
      ) : (
        <div key={i} className={`flex shrink-0 items-center ${m.short ? "h-[21px]" : "h-[22px]"} ${m.hot ? "bg-[#d1e2f2] outline outline-1 -outline-offset-1 outline-[#78aee5]" : ""}`}>
          <span className="flex h-full w-[27px] items-center pl-[3px]">{m.icon}</span>
          <span className="h-full w-px bg-[#d9d9d9]" />
          <span className={`ml-[4px] whitespace-nowrap ${m.bold ? "font-bold tracking-[-0.03em]" : "tracking-[-0.008em]"}`}>{m.label}</span>
          {m.sub && (
            <svg width="4" height="8" viewBox="0 0 4 8" className="mr-[9px] ml-auto">
              <path d="M0 0.500L4 4L0 7.500z" fill="#222" />
            </svg>
          )}
        </div>
      ),
    )}
  </div>
);

/* ---------- status bar & taskbar ---------- */

const Stat = ({ icon, text }: { icon: React.ReactNode; text?: string }) => (
  <div className="flex h-[23px] w-[156px] items-center gap-[5px] border-r border-[#d6d6d6] pl-[4px]">
    <span className="flex w-[14px] justify-center">{icon}</span>
    <span className="tracking-[-0.02em]">{text}</span>
  </div>
);

const SizeIcon = ({ dash }: { dash?: boolean }) => (
  <svg width="14" height="12" viewBox="0 0 14 12" fill="none" stroke="#1e395b">
    <rect x="4.500" y="1.500" width="8" height="7" strokeDasharray={dash ? "2 1" : undefined} />
    <path d="M1.500 9V1M0 2.500L1.500 0.500L3 2.500M4 10.500h9M11.500 9.500l1.500 1-1.500 1.500" />
  </svg>
);

const ZoomButton = ({ plus }: { plus: boolean }) => (
  <svg width="16" height="16" viewBox="0 0 16 16" fill="#fafafa" stroke="#808080">
    <circle cx="8" cy="8" r="7.400" />
    <path d={plus ? "M4 8h8M8 4v8" : "M4 8h8"} stroke="#444" strokeWidth="2" />
  </svg>
);

const StatusBar = () => (
  <div className="flex h-[26px] shrink-0 items-center border-t border-[#d6d6d6] bg-[#f0f0f0] pl-[3px] text-[#1a1a1a]">
    <Stat
      text="173, 794px"
      icon={
        <svg width="12" height="12" viewBox="0 0 12 12" stroke="#1e395b" fill="none">
          <path d="M6 0.500v11M0.500 6h11M4.500 2L6 0.500L7.500 2M4.500 10L6 11.500L7.500 10M2 4.500L0.500 6L2 7.500M10 4.500L11.500 6L10 7.500" />
        </svg>
      }
    />
    <Stat icon={<SizeIcon dash />} />
    <Stat icon={<SizeIcon />} text="1920 × 1080px" />
    <Stat
      text="Size: 132.4KB"
      icon={
        <svg width="12" height="12" viewBox="0 0 12 12" stroke="#1e395b" fill="none">
          <path d="M0.500 0.500h11v11h-11zM3 0.500v5h6v-5M3.500 11.500v-4h5v4M6 8v3" />
        </svg>
      }
    />
    <div className="ml-auto flex h-[23px] items-center border-l border-[#d6d6d6] pr-px pl-[21px]">
      <span className="w-[36px] tracking-[-0.02em]">100%</span>
      <ZoomButton plus={false} />
      <div className="mr-[10px] ml-[10px] flex h-[3px] w-[86px] items-center justify-center border border-[#d2d2d2] bg-[#e8e8e8]">
        <svg width="10" height="16" viewBox="0 0 10 16" className="shrink-0">
          <path d="M0.500 0.500h9v11.500L5 15.500L0.500 12z" fill="#f1f1f1" stroke="#9c9c9c" />
        </svg>
      </div>
      <ZoomButton plus />
    </div>
  </div>
);

const ExplorerBig = () => (
  <svg width="32" height="36" viewBox="0 0 32 36">
    <path d="M2 4h8l2 3h18v24H2z" fill="#e9cc6c" stroke="#c9a544" />
    <path d="M5 3h7v4H5z" fill="#4cb04c" />
    <path d="M13 5h7v3h-7z" fill="#d9503f" />
    <path d="M20 6h9v4h-9z" fill="#4e9bdb" />
    <path d="M1 10h30v21H1z" fill="#fbeaa6" stroke="#d8b95a" />
    <path d="M4 35V24c0-3 2-4 5-4h14c3 0 5 1 5 4v11h-6v-8H10v8z" fill="#8fcdee" stroke="#4f9fc9" />
  </svg>
);
const ChromeBig = () => (
  <svg width="30" height="30" viewBox="0 0 30 30">
    <circle cx="15" cy="15" r="14.500" fill="#4caf50" />
    <path d="M15 15L2.500 7.500A14.500 14.500 0 0127.800 8.500H15z" fill="#dd3b2e" />
    <path d="M15 8.500h12.800A14.500 14.500 0 0114 29.500l6.500-11z" fill="#fbd020" />
    <circle cx="15" cy="15" r="6.700" fill="#fff" />
    <circle cx="15" cy="15" r="5.300" fill="#4285d6" />
  </svg>
);
const MediaBig = () => (
  <svg width="28" height="28" viewBox="0 0 28 28">
    <path d="M8 3h18v22H8z" fill="#8fc0df" stroke="#5a93b8" />
    <path d="M4 2h18v23H4z" fill="#b5daee" stroke="#5a93b8" />
    <path d="M1 1h19v25H1z" fill="#a4d2ec" stroke="#5a93b8" />
    <circle cx="11" cy="14" r="9" fill="#f07d1a" />
    <path d="M8 8.500l8 5.500-8 5.500z" fill="#fff" />
  </svg>
);
const PaintNetBig = () => (
  <svg width="32" height="36" viewBox="0 0 32 36">
    <path d="M1 10l25-4 3 24-24 4z" fill="#fff" stroke="#aaa" />
    <path d="M4 12l20-3 3 19L7 31z" fill="#1d4f86" />
    <path d="M5 20c6-6 12 2 20-5l2 13L7 31z" fill="#3fa2c6" />
    <path d="M13 30L27 1l2 1-12 29z" fill="#d8dce0" stroke="#555" strokeWidth="0.800" />
    <path d="M10 35l2-10L23 8l3 2-10 18z" fill="#f3dc35" stroke="#6b6115" />
  </svg>
);
const CatBig = () => (
  <svg width="30" height="34" viewBox="0 0 30 34">
    <ellipse cx="15" cy="17" rx="14.300" ry="15.500" fill="#f6f2f8" stroke="#cdbcc9" />
    <path d="M6 10.500c0-3 4-1 5 0.500h8c1-1.500 5-3.500 5-0.500v5c0 8-4 10-9 10s-9-2-9-10z" fill="#3b2060" />
    <path d="M8 17c3-2 11-2 14 0 0 5-3 6.500-7 6.500S8 22 8 17z" fill="#5a3a8c" />
  </svg>
);
const TexBig = () => (
  <svg width="32" height="34" viewBox="0 0 32 34">
    <path d="M3 5l18-4 5 23-16 7z" fill="#d4d5d8" stroke="#555" />
    <path d="M3 5L1 19l9 12 2-6z" fill="#77797e" />
    <path d="M6 8l13-2.500 1 4.500-2 0.500-1-2.500-2.500 0.500 2.500 11.500 2 0 0 2-7.500 1.500v-2l2-1L11 9l-2.500 0.500V12l-2 0.500z" fill="#2323d2" />
    <path d="M30 5l1.500 2-13 22-4 3 1.500-4z" fill="#1a1a1a" />
    <path d="M20 22l2.500 1-6 8-2 1z" fill="#d6b53a" />
  </svg>
);
const AdobeBig = () => (
  <svg width="28" height="32" viewBox="0 0 28 32" className="-mt-[4px]">
    <defs>
      <linearGradient id="acrobat" x1="0" y1="0" x2="0" y2="1">
        <stop offset="0" stopColor="#f50f0f" />
        <stop offset="1" stopColor="#7b0000" />
      </linearGradient>
    </defs>
    <rect width="28" height="32" fill="url(#acrobat)" />
    <path d="M6 27c-2-2 3-5 9-6.500s10-1 9.500 1-6 0-9-5S12 6 14 6s1 8-2 14-5 8-6 7z" fill="none" stroke="#fff" strokeWidth="1.500" />
  </svg>
);
const PhotoBig = () => (
  <svg width="30" height="30" viewBox="0 0 30 30" className="-mt-[4px]">
    <rect x="2.500" y="2.500" width="25" height="25" fill="#fff" stroke="#9ab" />
    <rect x="4" y="4" width="22" height="22" fill="#5fb0ea" />
    <path d="M6 8c3-3 6 1 10-2l6 3-4 3z" fill="#e6f3fc" />
    <path d="M4 13c4-4 8 4 22 2v5H4z" fill="#2f6a4a" />
    <path d="M4 18h22v8H4z" fill="#3c7fa9" />
    <path d="M0 0h7v3H3v4H0zM23 0h7v7h-3V3h-4zM0 23h3v4h4v3H0zM27 23h3v7h-7v-3h4z" fill="#2e7cc4" stroke="#1c5a94" strokeWidth="0.500" />
  </svg>
);
const WinLogo = () => (
  <svg width="28" height="26" viewBox="0 0 28 26" fill="#fff">
    <path d="M0 3.800l11.500-1.700v10.400H0zM12.500 2L28 0v12.500H12.500zM0 13.500h11.500v10.400L0 22.200zM12.500 13.500H28V26l-15.500-2z" />
  </svg>
);

type Task = { icon: React.ReactNode; on?: boolean; stack?: boolean; active?: boolean };
const tasks: Task[] = [
  { icon: <ExplorerBig />, on: true, stack: true, active: true },
  { icon: <ChromeBig />, on: true },
  { icon: <MediaBig />, on: true },
  { icon: <PaintNetBig /> },
  {
    icon: (
      <span className="flex h-[30px] w-[30px] items-center justify-center rounded-full bg-gradient-to-b from-[#10214a] to-[#1f6fa5]">
        <FaSteamSymbol size={26} color="#fff" />
      </span>
    ),
  },
  {
    icon: (
      <span className="flex h-[30px] w-[30px] items-center justify-center bg-[radial-gradient(circle,#fff_0_11px,transparent_12px)]">
        <FaSkype size={33} color="#00aff0" className="shrink-0" />
      </span>
    ),
    on: true,
  },
  { icon: <CatBig />, on: true },
  { icon: <TexBig />, on: true, stack: true },
  {
    icon: <span className="flex h-8 w-8 items-center justify-center bg-[#0f6fb5] font-['Open_Sans'] text-[16px] font-bold tracking-[-0.03em] text-white">MP</span>,
    on: true,
  },
  { icon: <AdobeBig />, on: true },
  { icon: <PhotoBig />, on: true, stack: true },
  { icon: <PaletteIcon s={32} />, on: true },
];

const wood = "bg-[repeating-linear-gradient(135deg,#8f7163_0_10px,#7b5f53_10px_12px)]";

const Taskbar = () => (
  <div className="relative flex h-10 w-full border-t border-[#8f726d] bg-gradient-to-b from-[#bf9c95] to-[#b48f88]">
    <div className={`flex w-[52px] items-center justify-center pl-[3px] ${wood}`}>
      <WinLogo />
    </div>
    <div className="ml-[2px] flex gap-[2px]">
      {tasks.map((t, i) => (
        <div key={i} className="flex w-[60px]">
          <div
            className={`flex flex-1 items-center justify-center border ${t.active ? "border-[#f0e2df] bg-[#dccac6]" : t.on ? "border-[#8d716c] bg-[#c4a7a1] shadow-[inset_0_0_0_1px_#d8c2bd]" : "border-transparent"}`}
          >
            {t.icon}
          </div>
          {t.stack && (
            <div className={`w-[4px] border-y border-r ${t.active ? "border-[#f0e2df] bg-[#cdb5b0]" : "border-[#8d716c] bg-[#c9ada8]"}`} />
          )}
          {t.active && <div className="w-[4px] border-y border-r border-[#f0e2df] bg-[#c9ada8]" />}
        </div>
      ))}
    </div>
    <div className="ml-auto flex w-[532px] flex-col">
      <div className="flex h-[28px] border-b border-l border-[#a8857f] bg-[#b5918a]">
        <div className="ml-[7px] h-[22px] flex-1 border-b border-l border-[#a8857f]" />
      </div>
      <div className="flex flex-1">
        <div className="w-[93px] bg-[#b8948d]" />
        <div className="w-[8px] border-l border-[#a8857f] bg-[#b08b84]" />
        <div className={`flex-1 ${wood}`} />
      </div>
    </div>
    {/* translucent page indicator showing through the bar */}
    <div className="absolute top-0 right-[1px] flex h-5 gap-[6px] text-[13.500px] text-[#5b3438]">
      <div className="flex w-10 items-center justify-center border border-[#8d5f60]">100%</div>
      <div className="flex w-[104px] items-center justify-center whitespace-nowrap border border-[#8d5f60]">page 339 of 341</div>
    </div>
    <div className="absolute top-0 right-[15px] flex h-[39px] items-center text-white">
      <svg width="10" height="6" viewBox="0 0 10 6">
        <path d="M1 5.500L5 0.500L9 5.500z" fill="#fff" stroke="#555" strokeWidth="0.600" />
      </svg>
      <svg width="14" height="16" viewBox="0 0 14 16" className="ml-[14px]">
        <path d="M0.500 5h3L8 0.500v15L3.500 11h-3z" fill="#fff" stroke="#444" strokeWidth="0.600" />
        <path d="M10.500 5v6M12.800 6v4" stroke="#fff" />
      </svg>
      <svg width="16" height="16" viewBox="0 0 16 16" className="ml-[9px]">
        <path d="M1.500 0v16" stroke="#fff" strokeWidth="1.600" />
        <path d="M3 1h5l1 2h4v6H3z" fill="#fff" stroke="#333" strokeWidth="0.600" />
        <circle cx="11" cy="11" r="4.300" fill="#333" stroke="#fff" />
        <path d="M11 8.500V11l2 1.500" stroke="#fff" fill="none" />
      </svg>
      <svg width="16" height="16" viewBox="0 0 16 16" className="ml-[8px]" fill="none" stroke="#fff" strokeWidth="1.400">
        <path d="M6.500 3.500h8.500v7H6.500M9 14.500h4M11 11v3M1.500 1.500h4v4h-4zM3.500 6v7.500H8" />
      </svg>
      <span className="ml-[8px] flex items-end">
        <FaDropbox size={15} color="#fff" />
        <span className="-ml-[8px] flex h-[8px] w-[8px] rounded-full border border-white bg-[#35b04a]" />
      </span>
      <span className="ml-[14px] w-[40px] text-[12px] tracking-[-0.03em]">ENG</span>
      <div className="flex w-[60px] flex-col items-center text-[12px] leading-[17px] tracking-[-0.04em]">
        <span className="pr-[2px]">23:45</span>
        <span>13/03/2015</span>
      </div>
    </div>
  </div>
);

export default function App() {
  return (
    <div className="flex h-[1080px] w-[1920px] flex-col overflow-hidden bg-[#f0f0f0] font-['Open_Sans',sans-serif] text-[11.400px] leading-normal">
      <PaintHeader title="Screenshot 2015-03-13 19.35.35 - Paint" inner={false} />
      <div className="flex min-h-0 flex-1">
        <div className="flex w-[3px] flex-col bg-[#f0f0f0] pt-4">
          <div className="h-[650px] w-[2px] bg-[#cdcdcd]" />
        </div>
        <div className="relative min-w-0 flex-1 overflow-hidden bg-[#c6cfe0]">
          <div className="absolute top-[5px] left-[5px] flex h-[900px] w-[1920px] flex-col">
            <PaintHeader title="UpdateItem2 - Paint" inner />
            <div className="flex-1 bg-gradient-to-b from-[#c6cfe0] to-[#d8e1f0]" />
          </div>
          <div className="absolute top-[191px] left-[13px] h-[58px] w-px bg-black" />
          <ItemsWindow />
          <DetailWindow />
          <Explorer />
          <ContextMenu />
          <div className="absolute top-[805px] left-[1581px] flex flex-col whitespace-nowrap text-[#b5b5b5]">
            <span className="text-[19.2px] leading-[28px]">Activate Windows</span>
            <span className="text-[14.3px] leading-[18px]">Go to PC settings to activate Windows.</span>
          </div>
        </div>
        <div className="flex w-[14px] flex-col items-center overflow-hidden border-l border-white bg-[#f0f0f0]">
          <div className="flex h-[17px] items-center pl-[3px]">
            <Chevron dir="up" c="#555" />
          </div>
          <div className="h-[650px] w-full bg-[#cdcdcd]" />
          <div className="mt-auto flex h-[17px] items-center pl-[3px]">
            <Chevron dir="down" c="#555" />
          </div>
        </div>
      </div>
      <div className="flex h-[17px] shrink-0 items-center border-t border-white bg-[#f0f0f0] pl-[6px]">
        <Chevron dir="left" c="#555" />
        <div className="ml-[4px] h-[15px] w-[1842px] bg-[#cdcdcd]" />
        <span className="ml-[31px]">
          <Chevron dir="right" c="#555" />
        </span>
      </div>
      <StatusBar />
      <Taskbar />
    </div>
  );
}
